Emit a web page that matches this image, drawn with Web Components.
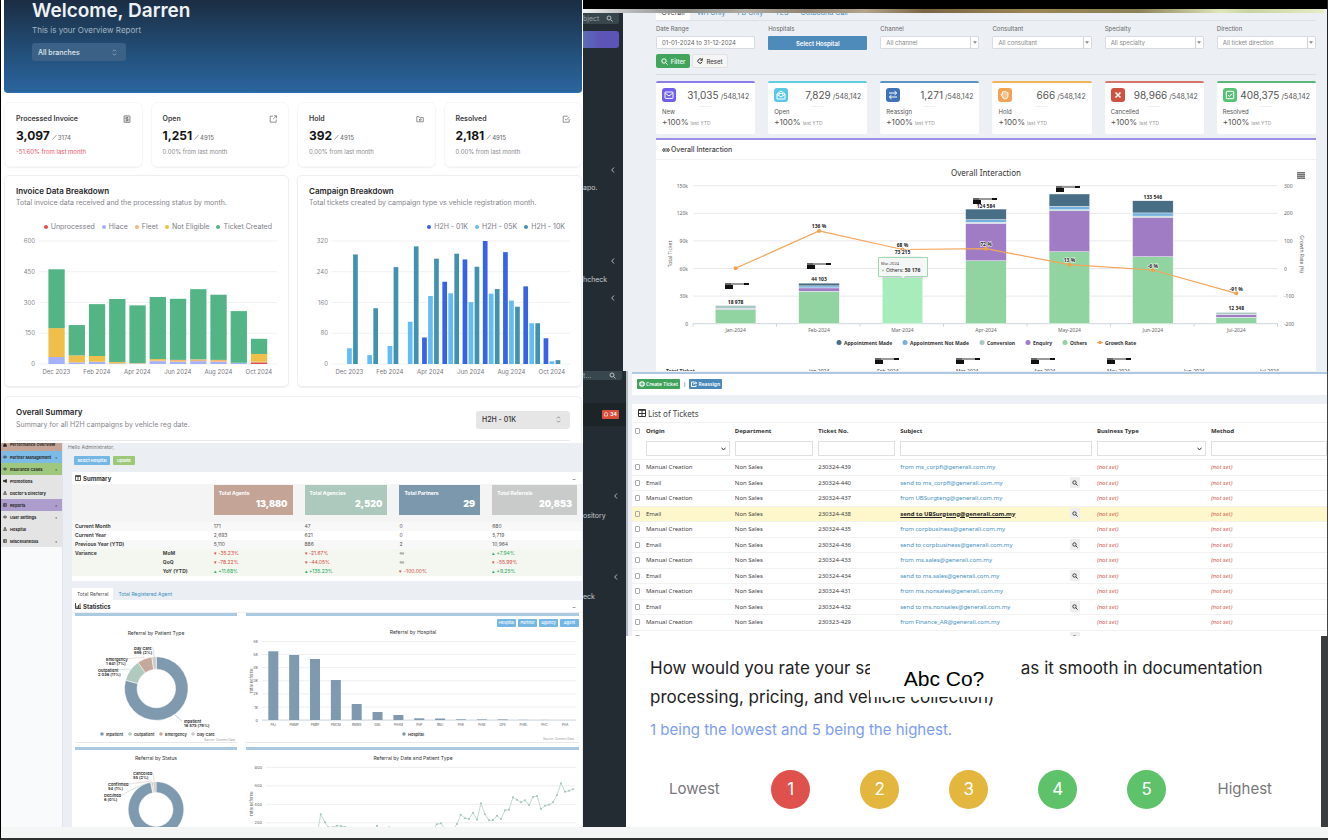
<!DOCTYPE html>
<html lang="en">
<head>
<meta charset="utf-8">
<title>Dashboards overview</title>
<style>
html,body{margin:0;background:#fff;color:#222;font-family:Inter,"Open Sans",sans-serif}
</style>
</head>
<body>
<collage-board>
  <overview-report slot="left"></overview-report>
  <referral-dashboard slot="left"></referral-dashboard>
  <interaction-dashboard slot="top"></interaction-dashboard>
  <side-rail slot="rail" kind="tickets"></side-rail>
  <ticket-list slot="main"></ticket-list>
  <survey-panel slot="main"></survey-panel>
</collage-board>
<script>
const BASE = `*{box-sizing:border-box}h1,h2,h3,p{margin:0;font-weight:inherit;font-size:inherit}
button,input,select{font-family:inherit;margin:0;border:0;padding:0;border-radius:0;background:none;color:inherit;appearance:none;outline:0}
button{cursor:pointer;white-space:nowrap}a{color:inherit;text-decoration:none}svg{display:block}svg text{font-family:inherit}
:host{display:block}`;
function define(name, css, render) {
  customElements.define(name, class extends HTMLElement {
    connectedCallback() {
      if (this.shadowRoot) return;
      this.attachShadow({ mode: 'open' }).innerHTML = `<style>${BASE}${css}</style>${render(this)}`;
    }
  });
}
const rect = (x, y, w, h, f, extra = '') => `<rect x="${x}" y="${y}" width="${w}" height="${h}" fill="${f}" ${extra}/>`;
const line = (x1, y1, x2, y2, s, w = 1) => `<path d="M${x1} ${y1}L${x2} ${y2}" stroke="${s}" stroke-width="${w}" fill="none"/>`;
const text = (x, y, t, size, fill, anchor = 'start', extra = '') => `<text x="${x}" y="${y}" font-size="${size}" fill="${fill}" text-anchor="${anchor}" ${extra}>${t}</text>`;
const MONTHS = ['Dec 2023', '', 'Feb 2024', '', 'Apr 2024', '', 'Jun 2024', '', 'Aug 2024', '', 'Oct 2024'];

define('collage-board', `
:host{display:grid;grid-template-columns:583fr 745fr;grid-template-rows:minmax(0,1fr) 13px;height:100vh;min-height:700px;background:#fff}
.left{border-left:1px solid #000;display:flex;flex-direction:column;min-width:0;min-height:0;overflow:hidden}
.right{display:flex;flex-direction:column;min-width:0;min-height:0;overflow:hidden}
.lower{flex:1;min-height:0;display:grid;grid-template-columns:43px minmax(0,1fr)}
.main{display:flex;flex-direction:column;min-height:0;min-width:0}
footer{grid-column:1/-1;background:#f4f6f6;border-left:1px solid #000;border-bottom:2px solid #2f3131}
`, () => `<div class="left"><slot name="left"></slot></div>
<div class="right"><slot name="top"></slot><div class="lower"><slot name="rail"></slot><div class="main"><slot name="main"></slot></div></div></div><footer></footer>`);

/* ---------- overview report ---------- */
const UPDOWN = `<svg width="5" height="7" viewBox="0 0 5 7" fill="none" stroke="currentColor" stroke-width=".8"><path d="M1 2.3 2.5.8 4 2.3M1 4.7 2.5 6.2 4 4.7"/></svg>`;
define('pick-box', `
:host{display:grid;grid-template-columns:1fr 14px;align-items:center;width:94px;height:18px;border-radius:3px;background:var(--bg,#e6e6e6);color:var(--ink,#333);flex:none}
select{grid-area:1/1/2/3;width:100%;height:100%;padding:0 6px;font-size:7px;font-weight:500}
svg{grid-area:1/2;opacity:.6}
`, el => `<select aria-label="${el.getAttribute('name')}"><option>${el.getAttribute('value')}</option></select>${UPDOWN}`);

const METRIC_ICONS = {
  invoice: '<rect x="1" y=".8" width="6" height="6.6" rx=".6" fill="#ddd"/><path d="M5 2.5H3.6q-.9 0-.9.8t.9.8h.8q.9 0 .9.8t-.9.8H2.8M4 2v4.2"/>',
  open: '<path d="M4 1.2H1.2v6h6V4.5M5 .8h2.5v2.5M7.4.9 4.2 4"/>',
  hold: '<path d="M.8 6.8V1.6h2.1l.8 1h3.6v4.2zM4.6 3.7 3 4.8l1.6 1M3 4.8H6"/>',
  resolved: '<path d="M7.2 4v3.2h-6v-6h4.6M2.8 3.8l1.4 1.4L7.4 1.8"/>'
};
define('metric-card', `
:host{display:block;border:1px solid #f7f7f8;border-radius:6px;padding:10px 11px 9px 11px;box-shadow:0 1px 1px #f1f1f1;min-width:0;height:65px}
header{display:flex;justify-content:space-between;font-size:7px;line-height:12px;font-weight:600;color:#3c3c40}
svg{width:8px;height:8px;margin-top:2px}
.n{display:flex;align-items:baseline;gap:2px;font-size:12px;line-height:16px;margin-top:3px;font-weight:700;color:#141416;white-space:nowrap}
.n small{font-size:6px;font-weight:500;color:#77777c}
.n svg{width:5px;height:6px;margin:0 -1px 0 0;align-self:center}
p{font-size:6px;line-height:10px;margin-top:1px;color:#8a8a90;white-space:nowrap}
:host([down]) p{color:#ee5468}
`, el => `<header><span>${el.getAttribute('label')}</span><svg viewBox="0 0 8 8" fill="none" stroke="#66666c" stroke-width=".7">${METRIC_ICONS[el.getAttribute('icon')]}</svg></header>
<div class="n">${el.getAttribute('value')}<svg viewBox="0 0 5 6" fill="none" stroke="#88888c" stroke-width=".8"><path d="M.5 5.500 4.500 1"/></svg><small>${el.getAttribute('total')}</small></div><p>${el.getAttribute('note')}</p>`);

define('report-chart', `
:host{display:block;border:1px solid #eeeef0;border-radius:5px;box-shadow:0 1px 1px #f0f0f0;min-width:0;padding-top:9px}
h2{font-size:8px;line-height:12px;font-weight:600;color:#26262a;padding:0 12px 0 11px}
p{font-size:7px;line-height:10px;margin-top:1px;color:#85858c;padding:0 12px 0 11px;white-space:nowrap}
ul{list-style:none;margin:11px 16px 0 0;padding:0;display:flex;justify-content:flex-end;gap:7px;font-size:7px;line-height:16px;color:#7d7d88;white-space:nowrap}
li{display:flex;align-items:center;gap:3px}i{width:4px;height:4px;border-radius:50%}
svg{width:100%;height:auto}
`, el => {
  const stacked = el.hasAttribute('stacked');
  const series = stacked
    ? [['Unprocessed', '#dc5050'], ['Hiace', '#a5b1f7'], ['Fleet', '#f2b777'], ['Not Eligible', '#f0bf4a'], ['Ticket Created', '#53b485']]
    : [['H2H - 01K', '#3763e6'], ['H2H - 05K', '#64bcf4'], ['H2H - 10K', '#4192ae']];
  const data = stacked
    ? [[0,34,0,141,287],[0,8,0,34,148],[0,11,0,28,253],[0,3,0,7,307],[0,3,0,2,281],[0,14,4,6,303],[0,11,9,0,298],[0,14,9,0,342],[0,11,9,0,318],[0,6,0,0,252],[8,0,3,38,74]]
    : [[0,41,285],[0,23,145],[0,47,252],[0,110,306],[69,177,274],[214,184,287],[272,161,253],[320,183,195],[291,165,149],[202,106,106],[67,7,10]];
  const max = stacked ? 600 : 320, k = 123 / max, zero = 129;
  let s = '';
  for (let i = 0; i < 5; i++) {
    const v = max * (4 - i) / 4, y = zero - v * k;
    s += line(33, y, 272, y, '#f1f1f3') + text(30, y + 2, v, 6, '#85858e', 'end');
  }
  data.forEach((row, m) => {
    const c = 51.4 + m * 20.25; let y = zero;
    row.forEach((v, j) => {
      if (!v) return;
      const h = v * k;
      if (stacked) { y -= h; s += rect(c - 8, y, 16.3, h, series[j][1]); }
      else s += rect(c - 8.3 + j * 6, zero - h, 4.7, h, series[j][1]);
    });
    if (MONTHS[m]) s += text(c, 139, MONTHS[m], 6, '#777780', 'middle');
  });
  return `<h2>${el.getAttribute('label')}</h2><p>${el.getAttribute('note')}</p>
<ul>${series.map(([n, c]) => `<li><i style="background:${c}"></i>${n}</li>`).join('')}</ul>
<svg viewBox="0 0 283 151">${s}</svg>`;
});

define('overview-report', `
:host{display:block;flex:none;padding:0 1px 0 3px;background:#fff}
.hero{background:linear-gradient(#1b2d43,#23517c 60%,#2b649e);border-radius:0 0 4px 4px;border-bottom:1px solid #2b6fb0;padding:0 28px 31px}
h1{font-size:19px;line-height:22px;font-weight:600;color:#eef2f5}
.hero p{font-size:8px;line-height:10px;margin:3px 0 8px;color:#a5b6c4}
.hero pick-box{--bg:#3b6286;--ink:#e1e9ef}
.cards{display:grid;grid-template-columns:repeat(4,1fr);gap:8px;margin-top:9px}
.charts{display:grid;grid-template-columns:1fr 1fr;gap:8px;margin-top:8px}
.sum{margin-top:9px;border:1px solid #eeeef0;border-bottom:0;border-radius:5px 5px 0 0;padding:9px 11px 0}
.sum header{display:flex;justify-content:space-between;align-items:center;padding-bottom:9px;border-bottom:1px solid #e9e9ec}
h2{font-size:8px;line-height:12px;font-weight:600;color:#26262a}
.sum p{font-size:7px;line-height:12px;margin-top:1px;color:#85858c}
.sum pick-box{margin-top:2px}
.tail{height:2px}
`, () => `<div class="hero"><h1>Welcome, Darren</h1><p>This is your Overview Report</p><pick-box name="Branch" value="All branches"></pick-box></div>
<div class="cards">
<metric-card down label="Processed Invoice" icon="invoice" value="3,097" total="3174" note="-51.60% from last month"></metric-card>
<metric-card label="Open" icon="open" value="1,251" total="4915" note="0.00% from last month"></metric-card>
<metric-card label="Hold" icon="hold" value="392" total="4915" note="0.00% from last month"></metric-card>
<metric-card label="Resolved" icon="resolved" value="2,181" total="4915" note="0.00% from last month"></metric-card></div>
<div class="charts"><report-chart stacked label="Invoice Data Breakdown" note="Total invoice data received and the processing status by month."></report-chart>
<report-chart label="Campaign Breakdown" note="Total tickets created by campaign type vs vehicle registration month."></report-chart></div>
<section class="sum"><header><div><h2>Overall Summary</h2><p>Summary for all H2H campaigns by vehicle reg date.</p></div><pick-box name="Campaign" value="H2H - 01K"></pick-box></header><div class="tail"></div></section>`);

/* ---------- referral dashboard ---------- */
const NAV_ICONS = {
  home: '<path d="M.5 2.500 2.500.600l2 1.900v2h-4z" fill="#222"/>',
  eye: '<ellipse cx="2.500" cy="2.500" rx="2" ry="1.300"/><circle cx="2.500" cy="2.500" r=".5"/>',
  horn: '<path d="M.500 1.700h1.500L4.500.600v3.800L2 3.300H.500z" fill="#222"/>',
  person: '<circle cx="2.500" cy="1.400" r=".9"/><path d="M.600 4.500q0-2 1.900-2t1.900 2z"/>',
  list: '<path d="M.500.700h4v3.600h-4zM.500 2.500h4M2 .700v3.600"/>'
};
define('admin-nav', `
:host{display:block;background:#f9fafc;border-right:1px solid #dfe4ea;font-size:4px;font-weight:700;color:#2b2b2b}
nav{display:grid;grid-template-rows:8px;grid-auto-rows:94fr;grid-auto-rows:12px}
a{display:flex;align-items:center;gap:3px;padding:0 5px 0 2px;background:#e4e4e4;white-space:nowrap;overflow:hidden}
a:first-child{align-items:flex-start;line-height:4px}
svg{width:4px;height:4px;flex:none}
b{margin-left:auto;font-weight:700}
`, () => {
  const items = [['Performance Overview', '#c5a498', 0, 'home'], ['Partner Management', '#7bbbe5', 1, 'eye'], ['Insurance Cases', '#a0c77e', 1, 'eye'], ['Promotions', '', 0, 'horn'], ["Doctor's Directory", '', 0, 'person'], ['Reports', '#ad9dcc', 1, 'list'], ['User Settings', '', 1, 'eye'], ['Hospital', '', 0, 'person'], ['Miscellaneous', '', 1, 'list']];
  return `<nav>${items.map(([t, c, m, i]) => `<a href="#" ${c ? `style="background:${c}"` : ''}><svg viewBox="0 0 5 5" fill="none" stroke="#333" stroke-width=".8">${NAV_ICONS[i]}</svg><span>${t}</span>${m ? '<b>‹</b>' : ''}</a>`).join('')}</nav>`;
});

define('donut-chart', `svg{width:100%;height:auto}`, el => {
  const status = el.getAttribute('kind') === 'status';
  const P = (cx, cy, r, a) => [cx + r * Math.sin(a * Math.PI / 180), cy - r * Math.cos(a * Math.PI / 180)];
  const slice = (cx, cy, R, r, a, b, f) => {
    const p = P(cx, cy, R, a), q = P(cx, cy, R, b), u = P(cx, cy, r, b), v = P(cx, cy, r, a), big = b - a > 180 ? 1 : 0;
    return `<path d="M${p}A${R} ${R} 0 ${big} 1 ${q}L${u}A${r} ${r} 0 ${big} 0 ${v}Z" fill="${f}" stroke="#fff" stroke-width=".5"/>`;
  };
  const lab = (x, y, a, b) => text(x, y, a, 4, '#222', 'start', 'font-weight="600"') + text(x, y + 4, b, 4, '#222', 'start', 'font-weight="600"');
  const lead = (d, c) => `<path d="${d}" fill="none" stroke="${c}" stroke-width=".5"/>`;
  if (status) return `<svg viewBox="0 0 162 90">${text(81, 10, 'Referral by Status', 5, '#333', 'middle')}
${slice(81, 59.5, 27.8, 17, 0, 349, '#7f9aae')}${slice(81, 59.5, 27.8, 17, 349, 351, '#b0cabf')}${slice(81, 59.5, 27.8, 17, 351, 354, '#c6a79b')}${slice(81, 59.5, 27.8, 17, 354, 360, '#c9cccc')}
${lab(58, 25, 'Cancelled', '55 (2%)')}${lab(33, 36, 'Confirmed', '54 (1%)')}${lab(29, 47, 'Declined', '6 (0%)')}
${lead('M76 23Q79 23 79 31', '#bbb')}${lead('M54 34 76 31V33', '#d9bdb3')}${lead('M47 45Q68 33 75 33', '#b0cabf')}</svg>`;
  const leg = [['Inpatient', '#7f9aae', 27], ['Outpatient', '#b0cabf', 55], ['Emergency', '#c6a79b', 86], ['Day Care', '#c9cccc', 118]];
  return `<svg viewBox="0 0 162 126">${text(81, 19, 'Referral by Patient Type', 5, '#333', 'middle')}
${slice(81.3, 72.5, 31.8, 19.3, 0, 285, '#7f9aae')}${slice(81.3, 72.5, 31.8, 19.3, 285, 325, '#b0cabf')}${slice(81.3, 72.5, 31.8, 19.3, 325, 352, '#c6a79b')}${slice(81.3, 72.5, 31.8, 19.3, 352, 360, '#c9cccc')}
${lab(59, 34, 'Day Care', '686 (2%)')}${lab(31, 45, 'Emergency', '1 641 (7%)')}${lab(23, 56, 'Outpatient', '2 036 (11%)')}${lab(109, 107, 'Inpatient', '16 575 (79%)')}
${lead('M76 31Q79 31 79 41', '#bbb')}${lead('M51 43 69 41V43', '#d9bdb3')}${lead('M43 54 54 53 57 55', '#b0cabf')}${lead('M100 99 107 105', '#7f9aae')}
${leg.map(([n, c, x]) => `<circle cx="${x}" cy="118" r="1.8" fill="${c}"/>` + text(x + 4, 119.5, n, 4, '#333', 'start', 'font-weight="600"')).join('')}
${text(160, 125, 'Source: Connect Data', 3, '#999', 'end')}</svg>`;
});

define('referral-chart', `svg{width:100%;height:auto}`, el => {
  let s = '';
  if (el.getAttribute('kind') === 'hospital') {
    ['6k', '5k', '4k', '3k', '2k', '1k', '0'].forEach((t, i) => { const y = 14.5 + i * 13.1; s += line(16, y, 330, y, i === 6 ? '#ccd3da' : '#eee') + text(12, y + 1.5, t, 4, '#666', 'end'); });
    const names = ['PAJ', 'PMMP', 'PMBP', 'PMCM', 'BMMS', 'GML', 'PHAM', 'PHP', 'BMJ', 'PHK', 'PHM', 'GPS', 'PHBL', 'PHC', 'PHA'];
    [68.7, 65, 61, 40, 16, 8, 5, 1.7, 1.5, .7, .6, .6, .2, .1, 0].forEach((h, i) => { s += rect(22.3 + i * 20.85, 93 - h, 10, h, '#7f9aae') + text(27.3 + i * 20.85, 99, names[i], 3, '#555', 'middle'); });
    return `<svg viewBox="0 0 333 115">${text(167, 7, 'Referral by Hospital', 5, '#333', 'middle')}${s}
${text(0, 0, 'Total Referral', 4, '#666', 'middle', 'transform="translate(7 54) rotate(-90)"')}
<circle cx="158" cy="107" r="1.8" fill="#7f9aae"/>${text(162, 108.5, 'Hospital', 4, '#333', 'start', 'font-weight="600"')}${text(328, 113, 'Source: Connect Data', 3, '#999', 'end')}</svg>`;
  }
  ['800', '600', '400', '200'].forEach((t, i) => { const y = 17.3 + i * 18.5; s += line(20, y, 330, y, '#eee') + text(16, y + 1.5, t, 4, '#666', 'end'); });
  const raw = '234,690 242,643 255,667 265,682 278,682 291,677 303,678 316,681 329,690 400,690 411,677 421,690 435,688 447,682 459,690 580,690 590,673 603,670 615,688 638,690 651,672 662,644 675,655 687,657 699,638 711,659 723,610 735,643 747,661 759,660 771,647 783,657 795,631 807,629 819,592 831,599 843,607 855,601 867,615 879,591 891,588 903,627 915,617 927,614 939,607 951,585 963,550 975,575 987,572 999,568';
  const pts = raw.split(' ').map(p => { const [x, y] = p.split(',').map(Number); return [+(x / 3 - 6).toFixed(1), +(y / 3 - 150).toFixed(1)]; });
  s += `<polyline points="${pts.join(' ')}" fill="none" stroke="#bcd6ca" stroke-width=".9"/>` + pts.map(p => `<circle cx="${p[0]}" cy="${p[1]}" r="1" fill="#a3c5b6"/>`).join('');
  return `<svg viewBox="0 0 333 90">${text(167, 10, 'Referral by Date and Patient Type', 5, '#333', 'middle')}${s}
${text(0, 0, 'Total Referral', 4, '#666', 'middle', 'transform="translate(7 54) rotate(-90)"')}</svg>`;
});

define('referral-dashboard', `
:host{display:grid;grid-template-columns:62px minmax(0,1fr);flex:1;min-height:0;overflow:hidden;background:#ebeff4}
main{padding:0 1px 0 9px;font-size:5px;color:#555;min-width:0;min-height:0}
.hello{line-height:8px;color:#777;margin-left:-4px}
.btns{display:flex;gap:3px;margin:5px 0 0 2px}
button{font-size:4px;line-height:9px;height:9px;color:#fff;background:#74b6e4;border-radius:1px;padding:0;font-weight:600;width:36px}
button.g{background:#9cc878;width:22px}
.box{background:#fff;margin-top:7px;padding-bottom:5px}
.box>header{display:flex;align-items:center;gap:2px;height:12px;padding:0 5px 0 3px;font-size:6px;font-weight:700;color:#333}
header button{margin-left:auto;width:6px;background:none;color:#777;font-size:6px}
table{border-collapse:collapse;table-layout:fixed;width:100%}
td,th{padding:0;height:9px;line-height:9px;text-align:left;font-weight:400}
tr>:first-child{padding-left:3px}tbody th{font-weight:700;color:#444}
thead tr{background:#f4f4f4}thead th{height:38px;padding:1px 12px 7px 0;vertical-align:top}thead th:last-child{padding-right:5px}
tbody tr:nth-child(odd){background:#f8f8f8}tbody tr:nth-child(n+4){background:#f3f7f0}
.tile{display:block;height:30px;padding:4px 5px;color:#fff;font-weight:700}.tile span{display:block;line-height:8px}.tile b{display:block;font-size:9px;line-height:14px;text-align:right}
.d{color:#d64a3c}.u{color:#26a65b}
.tabs{display:flex;margin-top:7px}.tabs a{line-height:12px;padding:0 5px;color:#3c8dbc}.tabs a.on{background:#fff;color:#555;border-radius:1px 1px 0 0}
.stats{margin-top:0;padding:0}
.stats>header{height:13px;border-bottom:1px solid #f0f0f0}
.grid{display:grid;grid-template-columns:162fr 333fr;gap:4px 9px;padding:0 3px}
.p{border-top:3px solid #a9cae0;border-bottom:1px solid #e8e8e8;min-width:0}
.sw{display:flex;justify-content:flex-end;gap:2px;padding-top:3px}.sw button{line-height:8px;height:8px;width:19px;font-weight:500}
`, () => {
  const tile = (n, v, c) => `<th><span class="tile" style="background:${c}"><span>${n}</span><b>${v}</b></span></th>`;
  const cell = v => `<td class="${v[0] === '-' ? 'd' : v[0] === '+' ? 'u' : ''}">${v[0] === '-' ? '▾ ' : v[0] === '+' ? '▴ ' : ''}${v}</td>`;
  const rows = [['Current Month', '', '171', '47', '0', '680'], ['Current Year', '', '2,693', '621', '0', '5,719'], ['Previous Year (YTD)', '', '5,110', '886', '2', '10,964'],
    ['Variance', 'MoM', '-35.23%', '-21.67%', '∞', '+7.94%'], ['', 'QoQ', '-78.22%', '-44.05%', '∞', '-55.99%'], ['', 'YoY (YTD)', '+11.68%', '+135.23%', '-100.00%', '+9.25%']];
  return `<admin-nav></admin-nav><main><p class="hello">Hello Administrator,</p><div class="btns"><button>Select Hospital</button><button class="g">Update</button></div>
<section class="box"><header><svg width="6" height="6" viewBox="0 0 6 6" fill="none" stroke="#333" stroke-width=".8"><path d="M.5.5h5v5h-5zM.5 1.5h5M3 1v4.5"/></svg><h2>Summary</h2><button aria-label="Collapse">−</button></header>
<table><colgroup><col style="width:17.800%"><col style="width:10%"><col style="width:17.800%"><col style="width:18.600%"><col style="width:18.200%"><col></colgroup>
<thead><tr><th></th><th></th>${tile('Total Agents', '13,880', '#c4a497')}${tile('Total Agencies', '2,520', '#adc9bd')}${tile('Total Partners', '29', '#7c98ad')}${tile('Total Referrals', '20,853', '#c9cbcb')}</tr></thead>
<tbody>${rows.map(r => `<tr><th>${r[0]}</th><th>${r[1]}</th>${r.slice(2).map(cell).join('')}</tr>`).join('')}</tbody></table></section>
<nav class="tabs"><a class="on" href="#">Total Referral</a><a href="#">Total Registered Agent</a></nav>
<section class="box stats"><header><svg width="6" height="6" viewBox="0 0 6 6" fill="none" stroke="#333" stroke-width=".9"><path d="M.5 0v5.5H6M2 5V3M3.5 5V2M5 5V.5"/></svg><h2>Statistics</h2><button aria-label="Collapse">−</button></header>
<div class="grid"><div class="p"><donut-chart kind="type"></donut-chart></div>
<div class="p"><div class="sw"><button>Hospital</button><button>Partner</button><button>Agency</button><button>Agent</button></div><referral-chart kind="hospital"></referral-chart></div>
<div class="p"><donut-chart kind="status"></donut-chart></div><div class="p"><referral-chart kind="date"></referral-chart></div></div></section></main>`;
});

/* ---------- dark navigation rail ---------- */
define('side-rail', `
:host{display:flex;flex-direction:column;background:#242c33;color:#c4ccd0;font-size:7px;min-height:0;overflow:hidden;padding-right:4px}
.s{background:#38464d;display:flex;justify-content:space-between;align-items:center;height:11px;border-radius:0 0 2px 0;color:#9aa5aa;padding-right:6px;line-height:9px}
:host([kind=tickets]) .s{height:9px}
.new{height:17px;margin-top:7px;border-radius:0 3px 3px 0;background:linear-gradient(90deg,#5a6dba,#5c54b6 50%)}
.row{display:flex;height:12px;line-height:12px;white-space:nowrap}
.row svg{margin:3px 3px 0 auto}
.hi{background:#1d2428;height:23px;align-items:center;margin:23px -4px 0 0;padding-right:7px}
.badge{margin-left:auto;background:#d94f3c;color:#fff;border-radius:1px;font-size:5px;line-height:9px;width:17px;font-weight:700;display:flex;justify-content:center;align-items:center;gap:2px}
.badge svg{margin:0}
`, el => {
  const chev = (m) => `<div class="row" style="margin-top:${m}px"><svg width="6" height="6" viewBox="0 0 6 6" fill="none" stroke="#c4ccd0" stroke-width=".9"><path d="M4 .5 1.7 3 4 5.5"/></svg></div>`;
  const word = (m, t) => `<div class="row" style="margin-top:${m}px">${t}</div>`;
  const mag = `<svg width="7" height="7" viewBox="0 0 7 7" fill="none" stroke="#b9c1c5" stroke-width="1"><circle cx="3" cy="3" r="2"/><path d="M4.5 4.5 6.5 6.5"/></svg>`;
  return el.getAttribute('kind') === 'tickets'
    ? `<div class="s"><span>t...</span>${mag}</div><div class="row hi"><span class="badge"><svg width="4" height="5" viewBox="0 0 4 5" fill="none" stroke="#fff" stroke-width=".6"><path d="M.5 4V2a1.5 1.5 0 013 0v2z"/></svg>34</span></div>${chev(64)}${word(8, 'ository')}${chev(49)}${word(8, 'eck')}`
    : `<div class="s"><span>bject</span>${mag}</div><div class="new"></div>${chev(116)}${word(6, 'apo.')}${chev(61)}${word(7, 'hcheck')}${chev(6)}`;
});

/* ---------- interaction dashboard ---------- */
define('filter-field', `
:host{display:block;font-size:6px;color:#666;min-width:0}
label{display:block;line-height:8px;margin-bottom:3px}
.c{display:grid;grid-template-columns:1fr 8px;height:13px;background:#fff;border:1px solid #d8dce2;border-radius:1px}
input,select{grid-area:1/1/2/3;width:100%;height:11px;font-size:6px;padding:0 5px;color:#888}
input{color:#666}
i{grid-area:1/2;border-left:1px solid #d0d4d8;display:grid;place-items:center;pointer-events:none}
button{display:block;width:100%;height:14px;background:#4e8aba;color:#fff;font-size:6px;font-weight:600;border-radius:1px}
`, el => {
  const k = el.getAttribute('kind'), v = el.getAttribute('value'), l = el.getAttribute('label');
  const body = k === 'button' ? `<button id="f">${v}</button>` : k === 'text' ? `<div class="c"><input id="f" value="${v}"></div>`
    : `<div class="c"><select id="f"><option>${v}</option></select><i><svg width="4" height="3" viewBox="0 0 4 3"><path d="M0 .3h4L2 2.8z" fill="#888"/></svg></i></div>`;
  return `<label for="f">${l}</label>${body}`;
});
const KPI_ICONS = {
  mail: '<rect x="3" y="4" width="8" height="6.4" rx=".5"/><path d="M3.2 5 7 8l3.8-3"/>',
  open: '<path d="M3 6v5h8V6L7 3zM3 6.5 7 9l4-2.5M5 7.5V5.5h4v2"/>',
  swap: '<path d="M3 5h7.5M8.5 3l2.2 2-2.2 2M11 9H3.5M5.5 7 3.3 9l2.2 2"/>',
  hand: '<path d="M4 8 3 6.5q.6-.8 1.4 0V4q.8-.8 1.3 0 .5-1.3 1.4 0 .9-1 1.4.2 1-.5 1.4.4v3.600Q9.500 11 7 11 5 11 4 8z" fill="#fff" fill-opacity=".35"/>',
  cross: '<path d="M4.500 4.500l5 5M9.500 4.500l-5 5" stroke-width="1.500"/>',
  check: '<rect x="3.300" y="3.300" width="7.400" height="7.400" rx=".6"/><path d="M5 7l1.500 1.500L9.200 5.600"/>'
};
define('kpi-card', `
:host{display:block;background:#fff;border-top:2px solid var(--edge);border-radius:2px;padding:5px 6px 0;height:53px;min-width:0;color:#555}
.t{display:flex;justify-content:space-between;align-items:center;white-space:nowrap;height:14px}
.ic{width:14px;height:14px;border-radius:3px;background:var(--tint)}
.v{display:flex;align-items:baseline;gap:2px;font-size:10px}.v small{font-size:7px}
hr{border:0;border-top:1px solid #eee;width:12px;margin:4px 0 0 37px}
p{font-size:6px;line-height:8px;margin-top:1px}
.g{display:flex;align-items:baseline;gap:2px;font-size:8px;line-height:12px}.g small{font-size:5px;color:#999}
`, el => `<div class="t"><svg class="ic" viewBox="0 0 14 14" fill="none" stroke="#fff" stroke-width="1">${KPI_ICONS[el.getAttribute('icon')]}</svg><span class="v">${el.getAttribute('value')}<small>/548,142</small></span></div><hr><p>${el.getAttribute('label')}</p><div class="g">+100%<small>last YTD</small></div>`);

define('interaction-chart', `:host{position:relative;font-family:"Noto Sans","Open Sans",sans-serif}svg{width:100%;height:auto}
button{position:absolute;right:11px;top:12px;width:8px;height:7px;background:repeating-linear-gradient(#777 0 1px,#aaa 1px 2px)}`, () => {
  const Z = 163.7, k = 138 / 150, cx = i => 79.6 + i * 83.45;
  const dark = '#486e86', blue = '#74b0dd', conv = '#aac8c3', pur = '#a07cc5', grn = '#91d4a2';
  let s = '';
  for (let i = 0; i < 6; i++) {
    const y = Z - i * 27.6;
    s += line(37, y, 622, y, i ? '#e8e8e8' : '#cfd6de') + text(32, y + 2, i ? i * 30 + 'k' : '0', 5, '#666', 'end') + text(628, y + 2, i * 100 - 200, 5, '#666');
  }
  for (let i = 0; i < 8; i++) s += line(37 + i * 83.5, Z, 37 + i * 83.5, Z + 3, '#cfd6de');
  const bars = [
    [[grn, 15.600], [pur, .9], [conv, 3.400]],
    [[grn, 35.200], [pur, 3.700], [blue, 2.200], [dark, 3]],
    [['#a8ecbc', 50.176], [pur, 2.200], ['#e3dfec', 14], ['#dfe7e8', 7]],
    [[grn, 68.400], [pur, 40.800], [conv, 1], [blue, 2.900], [dark, 11.500]],
    [[grn, 78.200], [pur, 44.500], [conv, 1.200], [blue, 3.600], [dark, 13.500]],
    [[grn, 72.800], [pur, 43], [conv, 1.200], [blue, 3.400], [dark, 13.200]],
    [[grn, 7], [pur, 3], [conv, 2.400]]];
  bars.forEach((b, i) => { let y = Z; b.forEach(([c, v]) => { y -= v * k; s += rect(cx(i) - 20.300, y, 40.600, v * k, c, 'stroke="#fff" stroke-width=".4"'); }); });
  const g = [108.3, 71, 89.5, 88.7, 104.7, 110, 133.3];
  s += `<polyline points="${g.map((y, i) => [cx(i), y].join()).join(' ')}" fill="none" stroke="#f3a558" stroke-width="1.200"/>` + g.map((y, i) => `<circle cx="${cx(i)}" cy="${y}" r="2" fill="#f3a04e"/>`).join('');
  const B = 'font-weight="700" stroke="#fff" stroke-width="1" paint-order="stroke"';
  ['18 978', '44 103', '73 215', '124 584', '', '133 546', '12 348'].forEach((t, i) => t && (s += text(cx(i), [143.5, 120.5, 94, 47.5, 0, 38.5, 149.500][i], t, 5, '#222', 'middle', B)));
  ['', '136 %', '68 %', '72 %', '13 %', '-6 %', '-91 %'].forEach((t, i) => t && (s += text(cx(i), [0, 68, 86.500, 86, 102, 107.500, 130.500][i], t, 5, '#222', 'middle', B)));
  ['Jan', 'Feb', 'Mar', 'Apr', 'May', 'Jun', 'Jul'].forEach((t, i) => s += text(cx(i), 172, t + '-2024', 5, '#666', 'middle'));
  const mark = (x, y) => rect(x + 6, y, 14, 2, '#999') + rect(x + 19, y, 5, 2, '#111') + rect(x, y, 6, 2, '#666') + rect(x, y + 2, 8, 4, '#111');
  s += [[69, 123], [151, 103], [317, 38], [400, 26], [219, 198], [300, 198], [375, 198], [451, 198]].map(p => mark(...p)).join('');
  s += `<path d="M222.500 97.500h49v19h-22l-2.500 3-2.500-3h-22z" fill="#f5f7f6" fill-opacity=".9" stroke="#9fd9af"/>` + text(225, 105, 'Mar-2024', 4, '#444') + `<circle cx="227" cy="110.500" r="1" fill="#91d4a2"/>` + text(230, 112, 'Others: <tspan font-weight="700">50 176</tspan>', 5, '#333');
  [['Appointment Made', dark, 183], ['Appointment Not Made', blue, 249], ['Conversion', conv, 326], ['Enquiry', pur, 372], ['Others', grn, 409]].forEach(([t, c, x]) => s += `<circle cx="${x}" cy="182.500" r="2.500" fill="${c}"/>` + text(x + 5, 184.500, t, 5, '#333', 'start', 'font-weight="700"'));
  s += line(441, 182.5, 447, 182.5, '#f3a04e') + `<circle cx="444" cy="182.500" r="1.700" fill="#f3a04e"/>` + text(449, 184.500, 'Growth Rate', 5, '#333', 'start', 'font-weight="700"');
  s += text(330, 16, 'Overall Interaction', 8, '#333', 'middle');
  s += text(0, 0, 'Total Ticket', 5, '#666', 'middle', 'transform="translate(16 94) rotate(-90)"') + text(0, 0, 'Growth Rate (%)', 5, '#666', 'middle', 'transform="translate(644 94) rotate(90)"');
  s += text(10, 213, 'Total Ticket', 5, '#333', 'start', 'font-weight="700"') + [153, 221, 300, 378, 451, 528, 604].map((x, i) => text(x, 213, ['Jan', 'Feb', 'Mar', 'Apr', 'May', 'Jun', 'Jul'][i] + '-2024', 5, '#333')).join('');
  return `<svg viewBox="0 0 660 211">${s}</svg><button aria-label="Chart menu"></button>`;
});

define('interaction-dashboard', `
:host{display:block;flex:none;background:#ecf0f5;border-right:1px solid #222}
.top{height:9px;background:#000}.photo{height:4px;margin-right:3px;background:linear-gradient(90deg,#f1f2f2 0,#b9bbbb 6%,#8b8b88 14%,#b1aba2 22%,#8f8270 30%,#b3a48a 38%,#7a6444 46%,#9a8453 60%,#8b8256 75%,#dfe6ba 86%,#c8d3a0 90%,#e6ecc4)}
.body{display:grid;grid-template-columns:40px minmax(0,1fr)}
main{padding:0 11px 0 33px;min-width:0}
.tabs{display:flex;gap:12px;height:8px;overflow:hidden;border-bottom:1px solid #dde1e6;font-size:7px;line-height:0px;color:#3c8dbc}
.tabs a{display:block}.tabs a.on{background:#fff;color:#444;width:34px;text-align:center;margin-right:-5px}
.f{display:grid;grid-template-columns:repeat(6,1fr);gap:13px;margin-top:4px;height:25px}
.b{display:flex;gap:2px;margin-top:4px}
.b button{display:flex;align-items:center;justify-content:center;gap:3px;height:14px;width:34px;font-size:6px;font-weight:500;border-radius:2px;background:#42a55e;color:#fff}
.b button+button{background:#f5f5f5;color:#444;border:1px solid #e2e2e2;width:36px}
hr{border:0;border-top:1px solid #d8dce1;margin:6px 0 0}
.k{display:grid;grid-template-columns:repeat(6,1fr);gap:13px;margin-top:6px}
.box{margin-top:4px;background:#fff;border-top:2px solid #9b90e6}
.box header{height:20px;border-bottom:1px solid #f0f0f0;display:flex;align-items:center;gap:1px;padding:0 6px;font-size:7px;font-weight:500;color:#444}
`, () => {
  const ff = [['Date Range', 'text', '01-01-2024 to 31-12-2024'], ['Hospitals', 'button', 'Select Hospital'], ['Channel', 'select', 'All channel'], ['Consultant', 'select', 'All consultant'], ['Specialty', 'select', 'All specialty'], ['Direction', 'select', 'All ticket direction']];
  const kk = [['New', 'mail', '31,035', '#6f5fe9', '#8b7ce6'], ['Open', 'open', '7,829', '#5bc9e6', '#5fcfdf'], ['Reassign', 'swap', '1,271', '#3f73b5', '#5b93bf'], ['Hold', 'hand', '666', '#f3a152', '#efb45c'], ['Cancelled', 'cross', '98,966', '#cf5240', '#d9766a'], ['Resolved', 'check', '408,375', '#58c274', '#58b876']];
  return `<div class="top"></div><div class="photo"></div><div class="body"><side-rail></side-rail><main>
<nav class="tabs"><a class="on" href="#">Overall</a><a href="#">WA Only</a><a href="#">FB Only</a><a href="#">TES</a><a href="#">Outbound Call</a></nav>
<div class="f">${ff.map(f => `<filter-field label="${f[0]}" kind="${f[1]}" value="${f[2]}"></filter-field>`).join('')}</div>
<div class="b"><button><svg width="7" height="7" viewBox="0 0 7 7" fill="none" stroke="#fff"><circle cx="3" cy="3" r="2.200"/><path d="M4.600 4.600 6.600 6.600"/></svg>Filter</button><button><svg width="6" height="6" viewBox="0 0 6 6" fill="none" stroke="#333"><path d="M4.800 1.600A2.200 2.200 0 105.200 3.700M5.300.3v2H3.400"/></svg>Reset</button></div><hr>
<div class="k">${kk.map(c => `<kpi-card label="${c[0]}" icon="${c[1]}" value="${c[2]}" style="--tint:${c[3]};--edge:${c[4]}"></kpi-card>`).join('')}</div>
<section class="box"><header><svg width="8" height="6" viewBox="0 0 8 6" fill="none" stroke="#444" stroke-width=".9"><path d="M2 1 .5 3 2 5M6 1l1.500 2L6 5M2.200 2h3.600v2H2.200z"/></svg><h2>Overall Interaction</h2></header><interaction-chart></interaction-chart></section></main></div>`;
});

/* ---------- tickets ---------- */
define('ticket-list', `
:host{display:block;flex:1;min-height:0;overflow:hidden;background:#ecf0f5;border-left:2px solid #b3b8c1;padding:1px 0 0 4px;border-right:1px solid #444;font-family:"Noto Sans","Open Sans",sans-serif;font-size:6px;color:#444}
.bar{border-top:2px solid #afcae0;background:#fff;height:23px;padding:5px;display:flex;gap:3px;line-height:10px}
.bar button{display:flex;align-items:center;justify-content:center;gap:1px;height:10px;width:43px;background:#3fa35c;color:#fff;font-size:5px;font-weight:600;border-radius:1px}
.bar span+button{background:#4a88ba;width:33px}
section{background:#fff;margin-top:9px}
header{display:flex;align-items:center;gap:2px;height:19px;border-bottom:1px solid #f2f2f2;padding-left:6px;font-size:8px;color:#444}
table{border-collapse:collapse;table-layout:fixed;width:100%}
td,th{padding:0 5px 0 0;text-align:left;white-space:nowrap;overflow:hidden}
th{height:16px;font-weight:700;color:#333}
td{height:15px;line-height:12px;border-top:1px solid #f2f2f2}tbody tr:nth-child(odd) td{height:16px}
tr>:first-child{padding:0 0 0 3px}
.f td{height:20px;border:0}.f input,.f select{display:block;width:100%;height:15px;border:1px solid #e0e0e0;font-size:6px}
.f .s{display:grid;grid-template-columns:1fr 9px;align-items:center}.f .s select{grid-area:1/1/2/3}.f .s svg{grid-area:1/2}
input[type=checkbox]{display:block;width:5px;height:6px;border:1px solid #aaa;border-radius:1px}
a{color:#4590c0}.r{color:#d65c50;font-style:italic}
.m{display:flex;justify-content:space-between;align-items:center;padding-right:12px}
.m button{width:10px;height:11px;background:#eee;border-radius:1px;display:grid;place-items:center}
.hl td{background:#fdf7cb}.hl a{color:#222;font-weight:700;text-decoration:underline}
`, () => {
  const rows = [['Manual Creation', '230324-439', 'from ms_corpfi@generali.com.my'], ['Email', '230324-440', 'send to ms_corpfi@generali.com.my'], ['Manual Creation', '230324-437', 'from UBSurgteng@generali.com.my'], ['Email', '230324-438', 'send to UBSurgteng@generali.com.my'], ['Manual Creation', '230324-435', 'from corpbusiness@generali.com.my'], ['Email', '230324-436', 'send to corpbusiness@generali.com.my'], ['Manual Creation', '230324-433', 'from ms.sales@generali.com.my'], ['Email', '230324-434', 'send to ms.sales@generali.com.my'], ['Manual Creation', '230324-431', 'from ms.nonsales@generali.com.my'], ['Email', '230324-432', 'send to ms.nonsales@generali.com.my'], ['Manual Creation', '230323-429', 'from Finance_AR@generali.com.my'], ['Email', '230323-430', 'send to Finance_AR@generali.com.my']];
  const mag = `<svg width="6" height="6" viewBox="0 0 6 6" fill="none" stroke="#444"><circle cx="2.500" cy="2.500" r="1.700"/><path d="M3.800 3.800 5.600 5.600"/></svg>`;
  const sel = n => `<div class="s"><select aria-label="${n}"><option></option></select><svg width="5" height="4" viewBox="0 0 5 4" fill="none" stroke="#333"><path d="M.5.700 2.500 3 4.500.700"/></svg></div>`;
  const inp = n => `<input type="text" aria-label="${n}">`;
  return `<div class="bar"><button><svg width="6" height="6" viewBox="0 0 6 6"><circle cx="3" cy="3" r="2.800" fill="#fff"/><path d="M3 1.400v3.200M1.400 3h3.200" stroke="#3fa35c"/></svg>Create Ticket</button><span>|</span><button><svg width="6" height="6" viewBox="0 0 6 6" fill="none" stroke="#fff"><path d="M3 1H.500v4.500H5V4M2.500 3.500 3 2h2.500M4.300.600 5.600 2 4.300 3.300"/></svg>Reassign</button></div>
<section><header><svg width="8" height="8" viewBox="0 0 8 8" fill="none" stroke="#333"><path d="M.500.500h7v7h-7zM.500 1.300h7M.500 4.500h7M4 1v6.500"/></svg><h2>List of Tickets</h2></header>
<table><colgroup><col style="width:2%"><col style="width:12.800%"><col style="width:12%"><col style="width:11.800%"><col style="width:28.300%"><col style="width:16.400%"><col></colgroup>
<thead><tr><th><input type="checkbox" aria-label="Select all"></th><th>Origin</th><th>Department</th><th>Ticket No.</th><th>Subject</th><th>Business Type</th><th>Method</th></tr>
<tr class="f"><td></td><td>${sel('Origin')}</td><td>${inp('Department')}</td><td>${inp('Ticket No.')}</td><td>${inp('Subject')}</td><td>${sel('Business Type')}</td><td style="padding:0">${inp('Method')}</td></tr></thead>
<tbody>${rows.map((r, i) => `<tr class="${i === 3 ? 'hl' : ''}"><td><input type="checkbox" aria-label="Select ${r[1]}"></td><td>${r[0]}</td><td>Non Sales</td><td>${r[1]}</td><td><div class="m"><a href="#">${r[2]}</a>${i % 2 ? `<button aria-label="View">${mag}</button>` : ''}</div></td><td class="r">(not set)</td><td class="r">(not set)</td></tr>`).join('')}</tbody></table></section>`;
});

/* ---------- survey ---------- */
define('survey-panel', `
:host{display:block;flex:none;position:relative;background:#fff;border-right:7px solid #3b3c3e;padding:18px 49px 18px 24px;color:#222224}
h2{font-size:17px;line-height:29px;font-weight:400;white-space:nowrap}
.gap{display:inline-block;width:147px}
.cover{position:absolute;left:244px;top:24px;width:148px;height:37px;background:#fff;font:500 21px/37px "Liberation Sans",sans-serif;color:#000;text-align:center}
p{font-size:15px;line-height:24px;margin-top:6px;color:#7b9df4}
.s{display:flex;align-items:center;justify-content:space-between;padding-left:19px;margin-top:27px;font-size:15px;color:#77777b;line-height:40px}
.o{display:flex;gap:50px}
button{width:39px;height:39px;border-radius:50%;color:#fff;font-size:17px;background:#5dc26a}
`, () => `<h2>How would you rate your sa<span class="gap"></span>as it smooth in documentation<br>processing, pricing, and vehicle collection)</h2><div class="cover">Abc Co?</div>
<p>1 being the lowest and 5 being the highest.</p>
<div class="s"><span>Lowest</span><div class="o"><button style="background:#df514c">1</button><button style="background:#e3b63e">2</button><button style="background:#e3b63e">3</button><button>4</button><button>5</button></div><span>Highest</span></div>`);
</script>
</body>
</html>
